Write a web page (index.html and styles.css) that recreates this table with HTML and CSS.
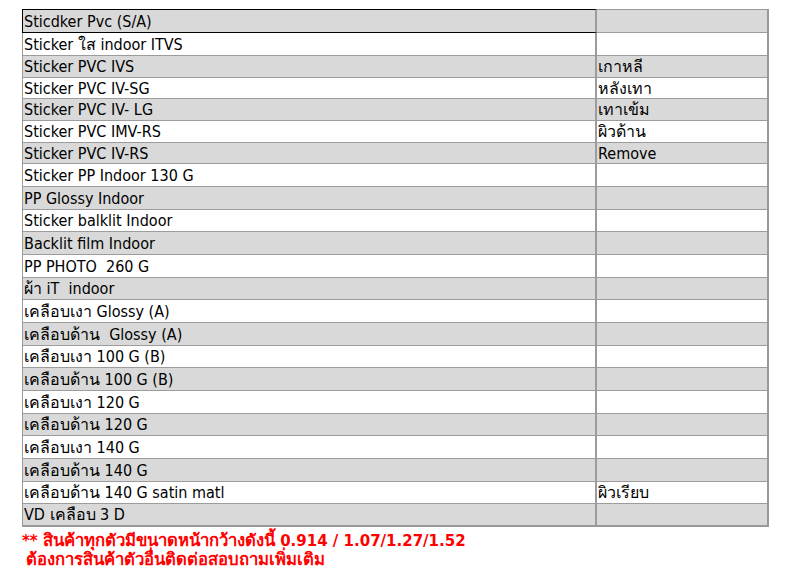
FILE: index.html
```html
<!DOCTYPE html>
<html lang="th">
<head>
<meta charset="utf-8">
<title>Sticker list</title>
<link rel="stylesheet" href="styles.css">
</head>
<body>
<div class="sheet">
  <div class="row first g"><div class="c1 sel">Sticdker Pvc (S/A)</div><div class="c2"></div></div>
  <div class="row h23"><div class="c1">Sticker ใส indoor ITVS</div><div class="c2"></div></div>
  <div class="row g h22"><div class="c1">Sticker PVC IVS</div><div class="c2">เกาหลี</div></div>
  <div class="row h21"><div class="c1">Sticker PVC IV-SG</div><div class="c2">หลังเทา</div></div>
  <div class="row g h22"><div class="c1">Sticker PVC IV- LG</div><div class="c2">เทาเข้ม</div></div>
  <div class="row h22"><div class="c1">Sticker PVC IMV-RS</div><div class="c2">ผิวด้าน</div></div>
  <div class="row g h21"><div class="c1">Sticker PVC IV-RS</div><div class="c2">Remove</div></div>
  <div class="row h23"><div class="c1">Sticker PP Indoor 130 G</div><div class="c2"></div></div>
  <div class="row g h23"><div class="c1">PP Glossy Indoor</div><div class="c2"></div></div>
  <div class="row h22"><div class="c1">Sticker balklit Indoor</div><div class="c2"></div></div>
  <div class="row g h23"><div class="c1">Backlit film Indoor</div><div class="c2"></div></div>
  <div class="row h23"><div class="c1">PP PHOTO&nbsp; 260 G</div><div class="c2"></div></div>
  <div class="row g h22"><div class="c1">ผ้า iT&nbsp; indoor</div><div class="c2"></div></div>
  <div class="row h23"><div class="c1">เคลือบเงา Glossy (A)</div><div class="c2"></div></div>
  <div class="row g h23"><div class="c1">เคลือบด้าน&nbsp; Glossy (A)</div><div class="c2"></div></div>
  <div class="row h22"><div class="c1">เคลือบเงา 100 G (B)</div><div class="c2"></div></div>
  <div class="row g h23"><div class="c1">เคลือบด้าน 100 G (B)</div><div class="c2"></div></div>
  <div class="row h23"><div class="c1">เคลือบเงา 120 G</div><div class="c2"></div></div>
  <div class="row g h22"><div class="c1">เคลือบด้าน 120 G</div><div class="c2"></div></div>
  <div class="row h23"><div class="c1">เคลือบเงา 140 G</div><div class="c2"></div></div>
  <div class="row g h23"><div class="c1">เคลือบด้าน 140 G</div><div class="c2"></div></div>
  <div class="row h22"><div class="c1">เคลือบด้าน 140 G satin matl</div><div class="c2">ผิวเรียบ</div></div>
  <div class="row g h23 last"><div class="c1">VD เคลือบ 3 D</div><div class="c2"></div></div>
</div>
<div class="note">
  <p class="l1">** สินค้าทุกตัวมีขนาดหน้ากว้างดังนี้ 0.914 / 1.07/1.27/1.52</p>
  <p class="l2">ต้องการสินค้าตัวอื่นติดต่อสอบถามเพิ่มเติม</p>
</div>
</body>
</html>
```
FILE: styles.css
```css
* { box-sizing: border-box; }
html, body { margin: 0; padding: 0; background: #fff; }
body {
  font-family: "DejaVu Sans Condensed", "DejaVu Sans", "Noto Sans", sans-serif;
  font-size: 16px;
  color: #000;
}
.sheet {
  margin: 9px 0 0 22px;
  width: 747px;
  border-left: 1px solid #999;
  border-right: 2px solid #999;
}
.row {
  display: flex;
  border-bottom: 1px solid #9c9c9c;
}
.row.last { border-bottom: 2px solid #999; }
.row.g { background: #d9d9d9; }
.h23 { height: 23px; }
.h22 { height: 22px; }
.h21 { height: 21px; }
.c1, .c2 {
  display: flex;
  align-items: center;
  padding: 1px 0 0 1px;
  white-space: nowrap;
  line-height: 1;
}
.c1 { width: 574px; border-right: 2px solid #9c9c9c; }
.c2 { flex: 1; }
.row.first {
  height: 24px;
  border-bottom: none;
}
.row.first .c1 {
  margin-left: -1px;
  width: 575px;
  border-top: 1px solid #000;
  border-left: 1px solid #000;
  border-bottom: 1px solid #000;
}
.row.first .c2 {
  border-top: 1px solid #999;
  border-bottom: 1px solid #9c9c9c;
}
.note {
  color: #ff0000;
  font-weight: bold;
  font-size: 16.7px;
  line-height: 19px;
  margin: 4px 0 0 22px;
}
.note p { margin: 0; white-space: nowrap; }
.note .l2 { padding-left: 4px; }
```
